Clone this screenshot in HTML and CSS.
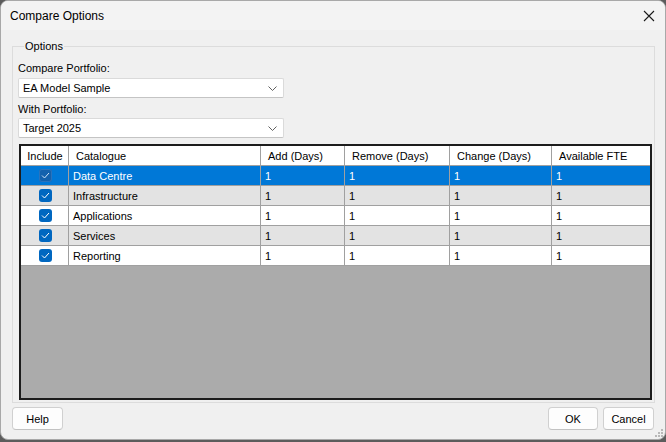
FILE: index.html
```html
<!DOCTYPE html>
<html>
<head>
<meta charset="utf-8">
<link rel="stylesheet" href="styles.css">
</head>
<body>
<div class="window">
  <div class="titlebar">
    <span class="title">Compare Options</span>
    <svg class="close" width="12" height="12" viewBox="0 0 12 12"><path d="M1 1 L11 11 M11 1 L1 11" stroke="#1a1a1a" stroke-width="1.1" fill="none"/></svg>
  </div>
  <div class="content">
    <fieldset class="group">
      <legend>Options</legend>
      <div class="label">Compare Portfolio:</div>
      <div class="combo combo-first"><span>EA Model Sample</span><svg class="chev" width="9" height="5" viewBox="0 0 9 5"><path d="M0.5 0.5 L4.5 4.5 L8.5 0.5" stroke="#606060" stroke-width="1" fill="none"/></svg></div>
      <div class="label label-second">With Portfolio:</div>
      <div class="combo combo-second"><span>Target 2025</span><svg class="chev" width="9" height="5" viewBox="0 0 9 5"><path d="M0.5 0.5 L4.5 4.5 L8.5 0.5" stroke="#606060" stroke-width="1" fill="none"/></svg></div>
      <div class="grid">
        <div class="row header">
          <div class="cell center">Include</div>
          <div class="cell">Catalogue</div>
          <div class="cell">Add (Days)</div>
          <div class="cell">Remove (Days)</div>
          <div class="cell">Change (Days)</div>
          <div class="cell last">Available FTE</div>
        </div>
        <div class="row selected">
          <div class="cell center"><span class="check"><svg width="9" height="7" viewBox="0 0 9 7"><path d="M1 3.5 L3.5 6 L8 1" stroke="#cfe3f7" stroke-width="1" fill="none"/></svg></span></div>
          <div class="cell">Data Centre</div>
          <div class="cell">1</div><div class="cell">1</div><div class="cell">1</div><div class="cell last">1</div>
        </div>
        <div class="row alt">
          <div class="cell center"><span class="check"><svg width="9" height="7" viewBox="0 0 9 7"><path d="M1 3.5 L3.5 6 L8 1" stroke="#ffffff" stroke-width="1" fill="none"/></svg></span></div>
          <div class="cell">Infrastructure</div>
          <div class="cell">1</div><div class="cell">1</div><div class="cell">1</div><div class="cell last">1</div>
        </div>
        <div class="row">
          <div class="cell center"><span class="check"><svg width="9" height="7" viewBox="0 0 9 7"><path d="M1 3.5 L3.5 6 L8 1" stroke="#ffffff" stroke-width="1" fill="none"/></svg></span></div>
          <div class="cell">Applications</div>
          <div class="cell">1</div><div class="cell">1</div><div class="cell">1</div><div class="cell last">1</div>
        </div>
        <div class="row alt">
          <div class="cell center"><span class="check"><svg width="9" height="7" viewBox="0 0 9 7"><path d="M1 3.5 L3.5 6 L8 1" stroke="#ffffff" stroke-width="1" fill="none"/></svg></span></div>
          <div class="cell">Services</div>
          <div class="cell">1</div><div class="cell">1</div><div class="cell">1</div><div class="cell last">1</div>
        </div>
        <div class="row">
          <div class="cell center"><span class="check"><svg width="9" height="7" viewBox="0 0 9 7"><path d="M1 3.5 L3.5 6 L8 1" stroke="#ffffff" stroke-width="1" fill="none"/></svg></span></div>
          <div class="cell">Reporting</div>
          <div class="cell">1</div><div class="cell">1</div><div class="cell">1</div><div class="cell last">1</div>
        </div>
        <div class="empty"></div>
      </div>
    </fieldset>
    <div class="buttons">
      <button class="btn btn-help">Help</button>
      <div class="spacer"></div>
      <button class="btn btn-ok">OK</button>
      <button class="btn btn-cancel">Cancel</button>
    </div>
  </div>
  <svg class="grip" width="8" height="8" viewBox="0 0 8 8">
    <rect x="6" y="0" width="2" height="2" fill="#b8b8b8"/>
    <rect x="3" y="3" width="2" height="2" fill="#b8b8b8"/>
    <rect x="6" y="3" width="2" height="2" fill="#b8b8b8"/>
    <rect x="0" y="6" width="2" height="2" fill="#b8b8b8"/>
    <rect x="3" y="6" width="2" height="2" fill="#b8b8b8"/>
    <rect x="6" y="6" width="2" height="2" fill="#b8b8b8"/>
  </svg>
</div>
</body>
</html>
```
FILE: styles.css
```css
html {
  background: #5c5c5c;
}
body {
  margin: 0;
  font-family: "Liberation Sans", Arial, sans-serif;
  font-size: 11px;
  color: #000;
}
.window {
  position: relative;
  width: 666px;
  height: 440px;
  box-sizing: border-box;
  border: 1px solid #a8a8a8;
  border-radius: 8px;
  background: #f0f0f0;
  display: flex;
  flex-direction: column;
  overflow: hidden;
}
.titlebar {
  height: 29px;
  flex: none;
  background: #f3f3f3;
  display: flex;
  align-items: center;
  padding-left: 9px;
  padding-right: 9px;
}
.title {
  font-size: 12px;
  flex: 1;
  padding-top: 1px;
}
.close {
  margin-right: 1px;
}
.content {
  flex: 1;
  display: flex;
  flex-direction: column;
  padding: 9px 10px 0 11px;
}
.group {
  margin: 0;
  border: 1px solid #dcdcdc;
  padding: 8px 2px 2px 5px;
  display: flex;
  flex-direction: column;
  min-width: 0;
}
.group legend {
  padding: 0 1px;
  margin-left: 6px;
  line-height: 14px;
  font-size: 11px;
}
.label {
  height: 14px;
  line-height: 14px;
}
.label-second {
  margin-top: 4px;
}
.combo {
  width: 266px;
  height: 20px;
  box-sizing: border-box;
  background: #fff;
  border: 1px solid #dadada;
  border-bottom-color: #c4c4c4;
  border-radius: 2px;
  display: flex;
  align-items: center;
  justify-content: space-between;
  padding: 0 6px 0 4px;
}
.combo-first {
  margin-top: 3px;
}
.combo-second {
  margin-top: 2px;
}
.chev {
  margin-top: 1px;
}
.grid {
  margin-top: 6px;
  margin-left: 1px;
  height: 256px;
  box-sizing: border-box;
  border: 2px solid #1c1c1c;
  display: flex;
  flex-direction: column;
  background: #ababab;
}
.row {
  display: grid;
  grid-template-columns: 48px 192px 84px 105px 102px 98px;
  height: 20px;
  flex: none;
  background: #fff;
}
.row.alt {
  background: #e3e3e3;
}
.row.selected {
  background: #0078d7;
  color: #fff;
}
.cell {
  box-sizing: border-box;
  border-right: 1px solid #a0a0a0;
  border-bottom: 1px solid #a0a0a0;
  padding-left: 4px;
  padding-top: 1px;
  line-height: 18px;
  white-space: nowrap;
  overflow: hidden;
  display: flex;
  align-items: center;
}
.cell.last {
  border-right: none;
}
.cell.center {
  justify-content: center;
  padding-left: 0;
  padding-top: 0;
}
.header .cell {
  padding-left: 7px;
  padding-top: 1px;
  background: #fff;
}
.header .cell.center {
  padding-left: 1px;
}
.check {
  width: 13px;
  height: 13px;
  border-radius: 3px;
  background: #0067c0;
  display: flex;
  align-items: center;
  justify-content: center;
  margin-left: 1px;
}
.selected .check {
  background: #1361ad;
  box-shadow: inset 0 0 0 1px #2a73bd;
}
.empty {
  flex: 1;
  background: #ababab;
}
.buttons {
  margin-top: 4px;
  display: flex;
  height: 23px;
  padding-right: 1px;
}
.spacer {
  flex: 1;
}
.btn {
  font-family: "Liberation Sans", Arial, sans-serif;
  font-size: 11px;
  color: #000;
  background: #fdfdfd;
  border: 1px solid #d0d0d0;
  border-bottom-color: #c2c2c2;
  border-radius: 4px;
  height: 23px;
  padding: 0;
  margin: 0;
}
.btn-help {
  width: 51px;
}
.btn-ok {
  width: 50px;
  margin-right: 5px;
}
.btn-cancel {
  width: 51px;
}
.grip {
  position: absolute;
  right: 2px;
  bottom: 2px;
}
```
